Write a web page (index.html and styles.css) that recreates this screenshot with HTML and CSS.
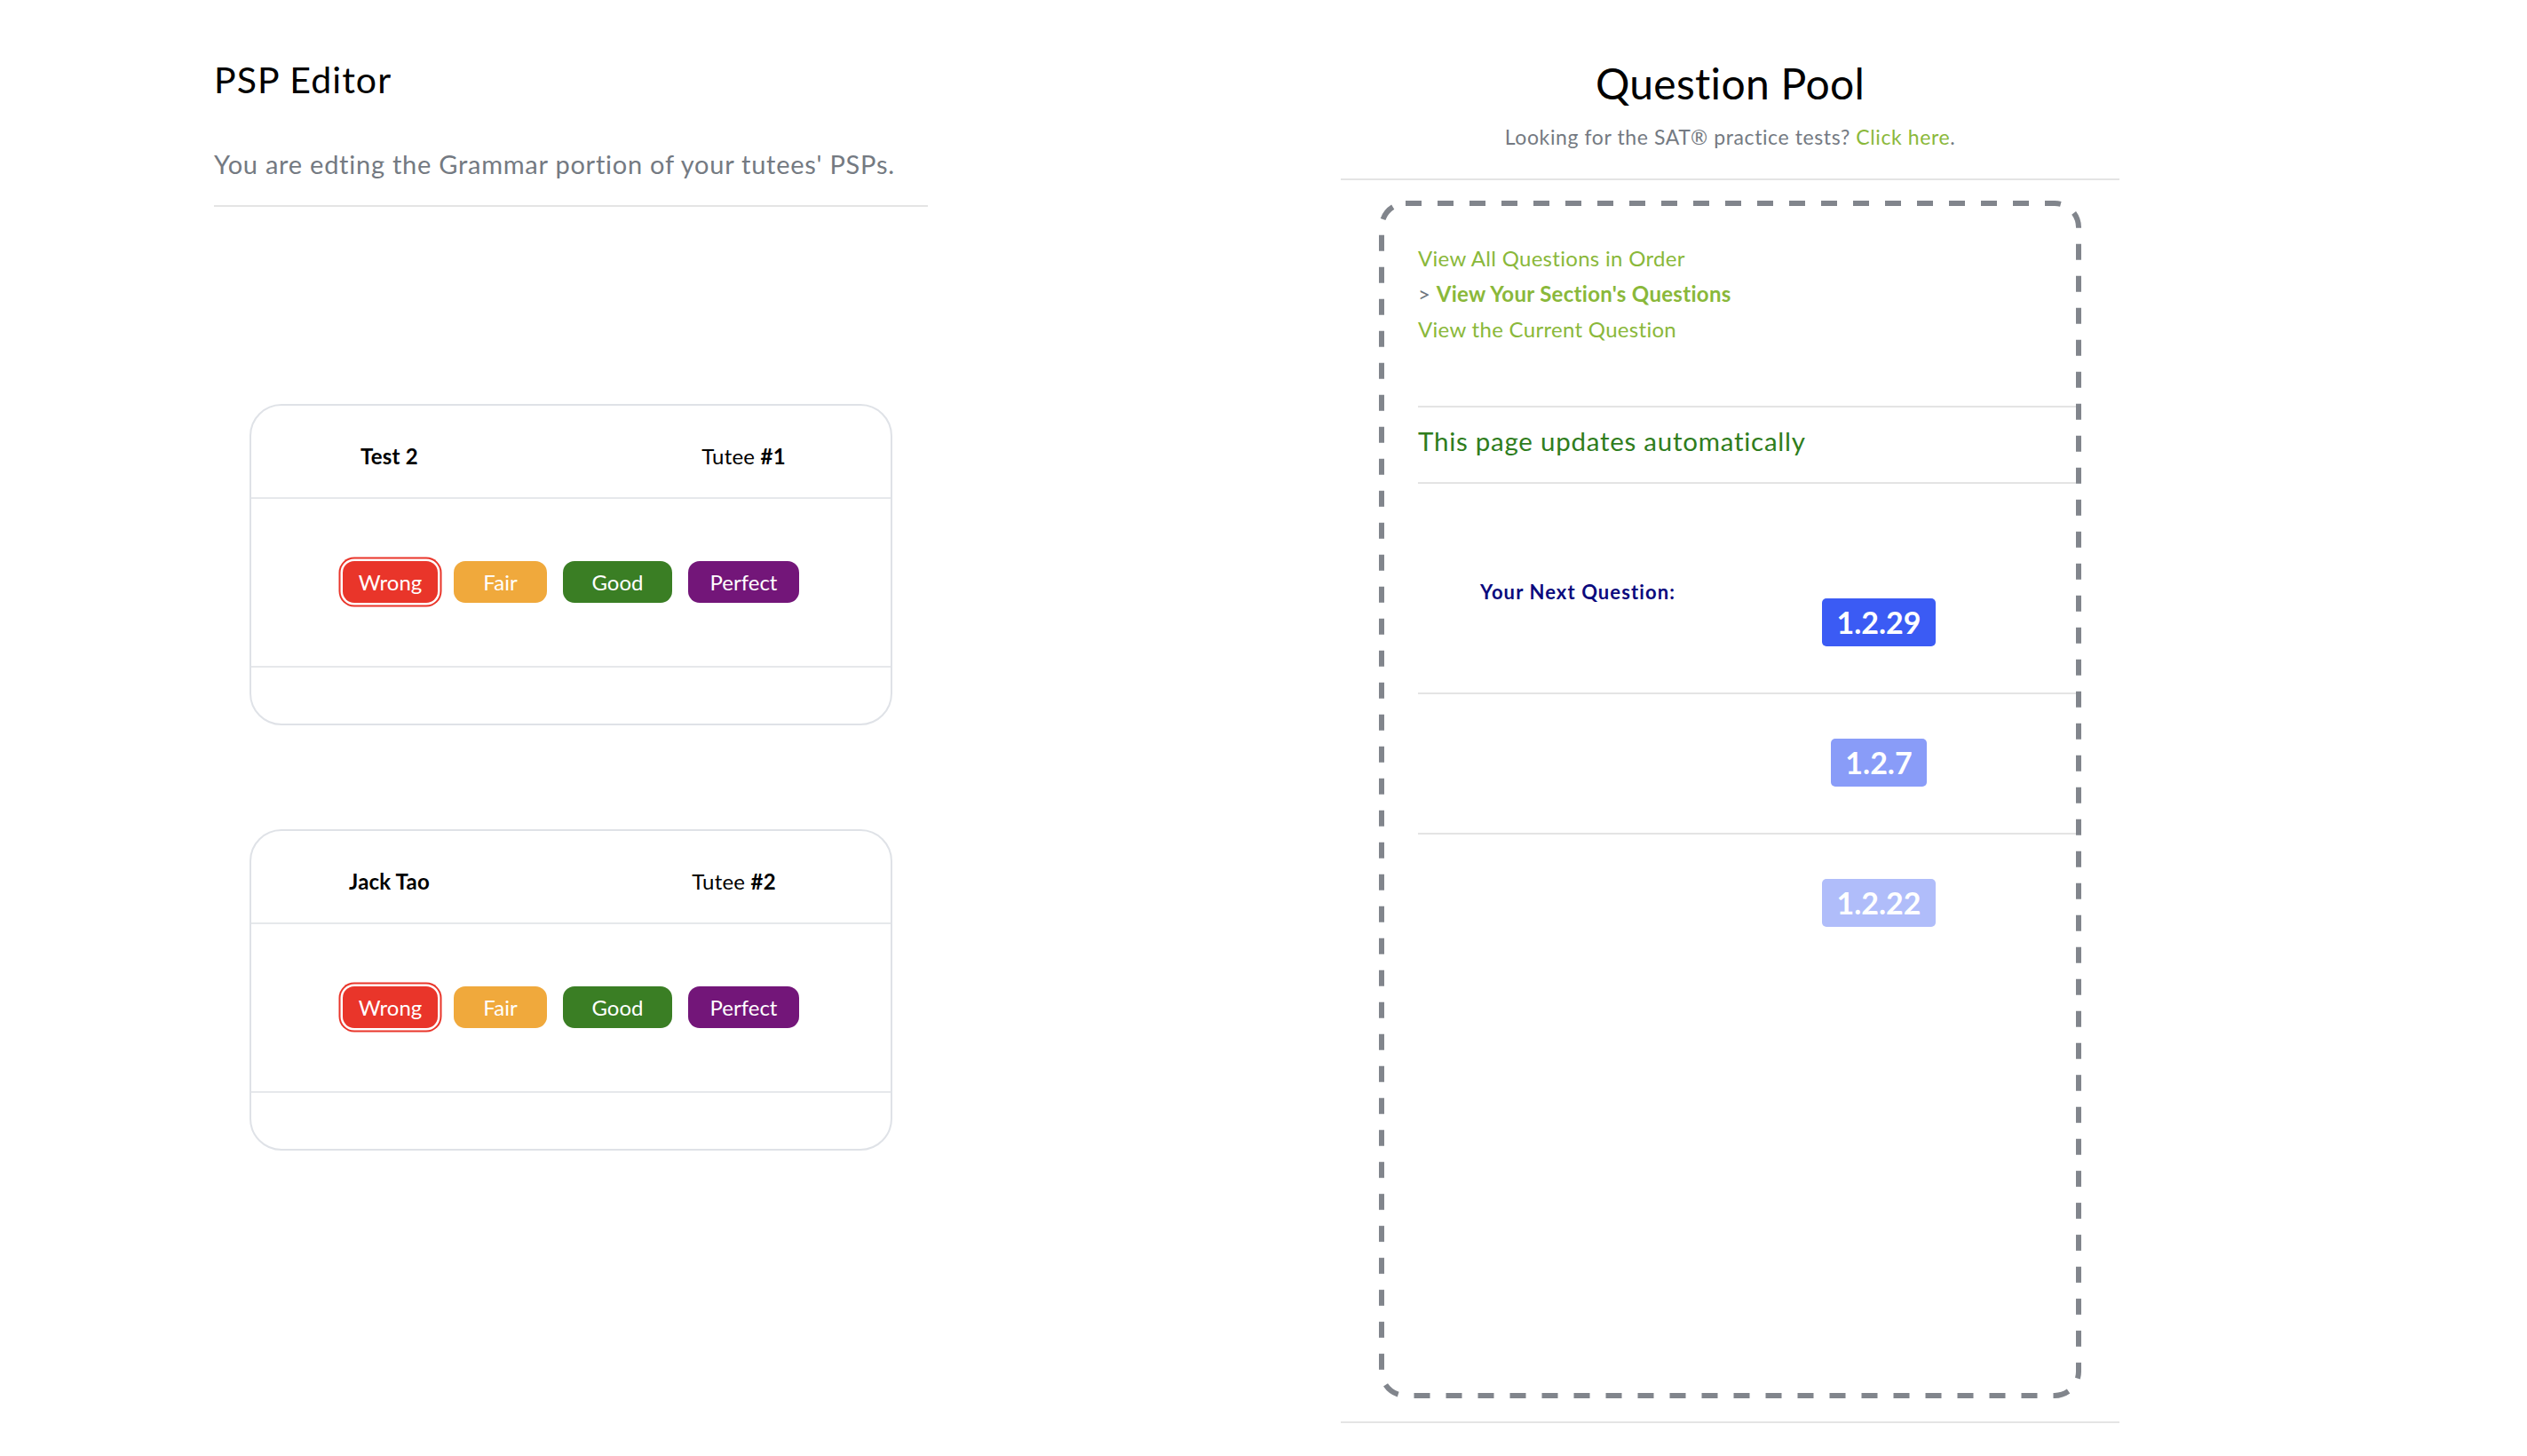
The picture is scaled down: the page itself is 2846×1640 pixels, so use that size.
FILE: index.html
```html
<!DOCTYPE html>
<html lang="en">
<head>
<meta charset="utf-8">
<title>PSP Editor</title>
<link rel="stylesheet" href="styles.css">
</head>
<body>
<main class="page">
  <section class="editor">
    <header class="editor-head">
      <h1 class="editor-title">PSP Editor</h1>
      <p class="editor-sub">You are edting the Grammar portion of your tutees' PSPs.</p>
    </header>
    <div class="cards">
      <article class="card">
        <div class="card-head card-head--one">
          <span class="card-name">Test 2</span>
          <span class="card-tutee">Tutee <b>#1</b></span>
        </div>
        <div class="card-body">
          <button class="btn btn-wrong is-active">Wrong</button>
          <button class="btn btn-fair">Fair</button>
          <button class="btn btn-good">Good</button>
          <button class="btn btn-perfect">Perfect</button>
        </div>
        <div class="card-foot"></div>
      </article>
      <article class="card">
        <div class="card-head card-head--two">
          <span class="card-name">Jack Tao</span>
          <span class="card-tutee">Tutee <b>#2</b></span>
        </div>
        <div class="card-body">
          <button class="btn btn-wrong is-active">Wrong</button>
          <button class="btn btn-fair">Fair</button>
          <button class="btn btn-good">Good</button>
          <button class="btn btn-perfect">Perfect</button>
        </div>
        <div class="card-foot"></div>
      </article>
    </div>
  </section>

  <section class="pool">
    <header class="pool-head">
      <h2 class="pool-title">Question Pool</h2>
      <p class="pool-sub">Looking for the SAT® practice tests? <a class="link" href="#">Click here</a>.</p>
    </header>
    <div class="pool-box">
      <svg class="pool-frame" aria-hidden="true"><rect class="pool-frame-rect" x="3" y="3" rx="27" ry="27"></rect></svg>
      <nav class="pool-nav">
        <div><a class="link" href="#">View All Questions in Order</a></div>
        <div><span class="caret">&gt;</span> <a class="link link--current" href="#">View Your Section's Questions</a></div>
        <div><a class="link" href="#">View the Current Question</a></div>
      </nav>
      <div class="pool-status">This page updates automatically</div>
      <div class="q-row q-row--next">
        <span class="q-label">Your Next Question:</span>
        <span class="badge">1.2.29</span>
      </div>
      <div class="q-row">
        <span></span>
        <span class="badge badge--soft">1.2.7</span>
      </div>
      <div class="q-row q-row--last">
        <span></span>
        <span class="badge badge--faint">1.2.22</span>
      </div>
    </div>
  </section>
</main>
</body>
</html>
```

FILE: styles.css
```css
* { box-sizing: border-box; }

html, body {
  margin: 0;
  padding: 0;
  background: #ffffff;
}

body {
  font-family: Lato, "Noto Sans", "Liberation Sans", sans-serif;
  color: #000000;
  width: 2846px;
  height: 1640px;
  overflow: hidden;
}

.page {
  display: flex;
  align-items: flex-start;
  padding-left: 241px;
}

/* ---------- Left: editor ---------- */
.editor {
  width: 804px;
}

.editor-head {
  padding-top: 65px;
  padding-bottom: 28px;
  border-bottom: 2px solid #e4e4e4;
}

.editor-title {
  margin: 0;
  font-size: 41px;
  line-height: 1.2;
  font-weight: 400;
  letter-spacing: 1.1px;
}

.editor-sub {
  margin: 54px 0 0;
  font-size: 29px;
  line-height: 1.2;
  letter-spacing: 0.75px;
  color: #747a82;
}

.cards {
  margin-top: 222px;
  display: flex;
  flex-direction: column;
  gap: 117px;
  padding: 0 40px;
}

.card {
  border: 2px solid #dfe2e7;
  border-radius: 36px;
  overflow: hidden;
}

.card-head {
  display: grid;
  grid-template-columns: 311px 1fr;
  padding: 43px 0 31px;
  border-bottom: 2px solid #e6e8eb;
  font-size: 24px;
  line-height: 1.2;
  letter-spacing: 0.2px;
}

.card-name {
  text-align: center;
  font-weight: 700;
}

.card-tutee {
  text-align: center;
  padding-left: 78px;
}

.card-head--two .card-tutee {
  padding-left: 56px;
}

.card-tutee b { font-weight: 700; }

.card-body {
  display: flex;
  justify-content: center;
  gap: 18px;
  padding: 70px 0 71px;
  border-bottom: 2px solid #e6e8eb;
}

.card-foot {
  height: 63px;
}

.btn {
  height: 47px;
  padding: 0;
  border: 0;
  border-radius: 13px;
  font-family: inherit;
  font-size: 24px;
  color: #ffffff;
  line-height: 47px;
  cursor: pointer;
}

.btn-wrong   { width: 107px; background: #e9352a; }
.btn-fair    { width: 105px; background: #f0a93c; }
.btn-good    { width: 123px; background: #3a7e24; }
.btn-perfect { width: 125px; background: #731679; }

.btn.is-active {
  box-shadow: 0 0 0 2.5px #ffffff, 0 0 0 4.5px #e9352a;
}

/* ---------- Right: question pool ---------- */
.pool {
  margin-left: 465px;
  width: 877px;
  border-bottom: 2px solid #e4e4e4;
}

.pool-head {
  text-align: center;
  padding-top: 65px;
  padding-bottom: 33px;
  border-bottom: 2px solid #e4e4e4;
}

.pool-title {
  margin: 0;
  font-size: 48px;
  line-height: 1.2;
  font-weight: 400;
  letter-spacing: 0.3px;
}

.pool-sub {
  margin: 18px 0 0;
  font-size: 23px;
  line-height: 1.2;
  letter-spacing: 0.6px;
  color: #747a82;
}

.link {
  color: #8ab83a;
  text-decoration: none;
}

.link--current { font-weight: 700; }

.pool-box {
  position: relative;
  margin: 23px 43px 26px;
  height: 1349px;
  padding: 45px 0 0 44px;
}

.pool-frame {
  position: absolute;
  inset: 0;
  width: 100%;
  height: 100%;
  pointer-events: none;
}

.pool-frame-rect {
  width: calc(100% - 6px);
  height: calc(100% - 6px);
  fill: none;
  stroke: #81858c;
  stroke-width: 6;
  stroke-dasharray: 18 18;
}

.pool-nav {
  font-size: 24px;
  line-height: 40px;
  letter-spacing: 0.3px;
  padding-bottom: 66px;
  margin-right: 6px;
  border-bottom: 2px solid #e4e4e4;
}

.caret { color: #6c757d; }

.pool-status {
  padding: 20px 0 28px;
  margin-right: 6px;
  font-size: 29.5px;
  line-height: 1.2;
  letter-spacing: 0.75px;
  color: #2f7d1d;
  border-bottom: 2px solid #e4e4e4;
}

.q-row {
  display: grid;
  grid-template-columns: 360px 318px;
  justify-items: center;
  align-items: start;
  padding: 50px 0 52px;
  margin-right: 6px;
  border-bottom: 2px solid #e4e4e4;
}

.q-row--next { padding-top: 109px; }
.q-row--next .badge { margin-top: 20px; }
.q-row--last { border-bottom: 0; }

.q-label {
  font-size: 22px;
  line-height: 1.2;
  font-weight: 700;
  letter-spacing: 1.1px;
  color: #0b0a7d;
}

.badge {
  display: inline-block;
  height: 54px;
  padding: 0 16px;
  border-radius: 5px;
  background: #3b5bf4;
  color: #ffffff;
  font-size: 34px;
  font-weight: 700;
  line-height: 54px;
}

.badge--soft  { opacity: 0.6; }
.badge--faint { opacity: 0.4; }
```
